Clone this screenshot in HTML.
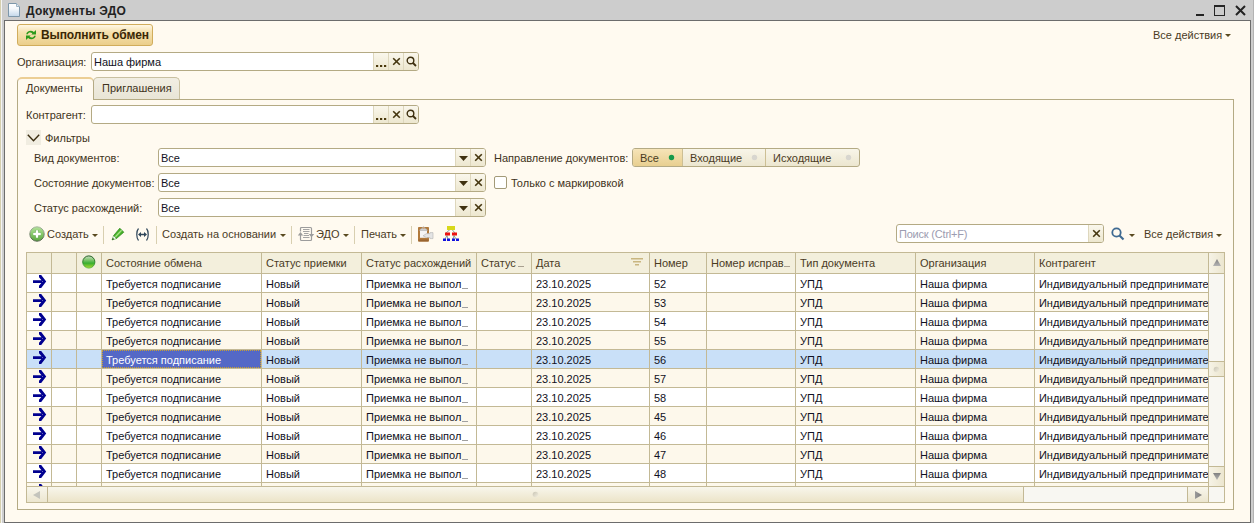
<!DOCTYPE html><html><head><meta charset="utf-8"><style>
*{margin:0;padding:0;box-sizing:border-box}
html,body{width:1254px;height:523px;overflow:hidden;background:#cdcdcd;font-family:"Liberation Sans", sans-serif;font-size:11px}
.a{position:absolute}
.t{position:absolute;white-space:nowrap;line-height:13px}
</style></head><body>
<div class="a" style="left:0px;top:0px;width:1px;height:523px;background:#d6cfae"></div>
<div class="a" style="left:1px;top:0px;width:1px;height:523px;background:#f4f4f4"></div>
<div class="a" style="left:1253px;top:0px;width:1px;height:523px;background:#b3b3b3"></div>
<div class="a" style="left:4px;top:20px;width:1247px;height:503px;border:1px solid #6c6c6c;background:#fffaf0"></div>
<svg class="a" style="left:8px;top:3px" width="12" height="14" viewBox="0 0 12 14">
<defs><linearGradient id="dg" x1="0" y1="0" x2="0" y2="1"><stop offset="0" stop-color="#ffffff"/><stop offset="0.4" stop-color="#f6f9fc"/><stop offset="1" stop-color="#c2d7ea"/></linearGradient></defs>
<path d="M0.5 0.5 H8.5 L11.5 3.5 V13.5 H0.5 Z" fill="url(#dg)" stroke="#7d97aa" stroke-width="1"/>
<path d="M8.5 0.5 V3.5 H11.5" fill="#dde8f0" stroke="#9fb4c4" stroke-width="1"/>
</svg>
<div class="t" style="left:26px;top:5px;color:#222;font-size:12px;font-weight:bold;letter-spacing:0.25px">Документы ЭДО</div>
<div class="a" style="left:1196px;top:14px;width:8px;height:2px;background:#222"></div>
<div class="a" style="left:1214px;top:5px;width:11px;height:11px;border:1px solid #262626;border-top-width:2px"></div>
<svg class="a" style="left:1235px;top:5px" width="11" height="11" viewBox="0 0 11 11"><path d="M1 1 L10 10 M10 1 L1 10" stroke="#222" stroke-width="2"/></svg>
<div class="a" style="left:17px;top:24px;width:136px;height:22px;border:1px solid #d1ad5c;border-radius:3px;background:linear-gradient(#fff8e6 0%,#f6e2b0 35%,#ebcf8c 100%)"></div>
<svg class="a" style="left:26px;top:30px" width="10" height="10" viewBox="0 0 10 10">
<path d="M0.2 4.3 C0.8 1.0 5.0 -0.6 7.9 2.0 L6.5 3.5 C4.6 1.8 2.2 2.3 1.9 4.3 Z M10 0 V4.6 H5.3 Z" fill="#2c9a1c"/>
<path d="M9.8 5.7 C9.2 9.0 5.0 10.6 2.1 8.0 L3.5 6.5 C5.4 8.2 7.8 7.7 8.1 5.7 Z M0 10 V5.4 H4.7 Z" fill="#2c9a1c"/>
</svg>
<div class="t" style="left:41px;top:29px;color:#3a2705;font-size:12px;font-weight:bold;letter-spacing:-0.1px">Выполнить обмен</div>
<div class="t" style="left:1153px;top:29px;color:#4a3b1f;font-size:11px;font-weight:normal;">Все действия</div>
<svg class="a" style="left:1225px;top:34px" width="6" height="4"><path d="M0 0H6L3 3Z" fill="#5a4a20"/></svg>
<div class="t" style="left:17px;top:56px;color:#3e3320;font-size:11px;font-weight:normal;">Организация:</div>
<div class="a" style="left:91px;top:52px;width:328px;height:19px;border:1px solid #b4aa84;border-radius:3px;background:#fff;overflow:hidden">
<div class="a" style="left:281px;top:0;width:15px;height:17px;border-left:1px solid #ded7bd;background:linear-gradient(#faf7ec,#ede7cf)">
<svg class="a" style="left:2px;top:12px" width="11" height="3"><rect x="0" y="0" width="2.2" height="2" fill="#4a380c"/><rect x="4" y="0" width="2.2" height="2" fill="#4a380c"/><rect x="8" y="0" width="2.2" height="2" fill="#4a380c"/></svg>
</div>
<div class="a" style="left:296px;top:0;width:15px;height:17px;border-left:1px solid #ded7bd;background:linear-gradient(#faf7ec,#ede7cf)">
<svg class="a" style="left:3px;top:4px" width="9" height="9"><path d="M1.2 1.2L7.8 7.8M7.8 1.2L1.2 7.8" stroke="#45360f" stroke-width="1.6"/></svg>
</div>
<div class="a" style="left:311px;top:0;width:15px;height:17px;border-left:1px solid #ded7bd;background:linear-gradient(#faf7ec,#ede7cf)">
<svg class="a" style="left:2px;top:3px" width="11" height="11"><circle cx="4.5" cy="4.5" r="3.3" fill="none" stroke="#3e3010" stroke-width="1.4"/><path d="M7 7L10 10" stroke="#3e3010" stroke-width="1.8"/></svg>
</div>
</div>
<div class="t" style="left:94px;top:56px;color:#111122;font-size:11px;font-weight:normal;">Наша фирма</div>
<div class="a" style="left:17px;top:99px;width:1217px;height:411px;border:1px solid #b4aa84;border-top:1px solid #b4aa84"></div>
<div class="a" style="left:93px;top:77px;width:87px;height:22px;border:1px solid #c9c0a0;border-bottom:none;border-radius:5px 5px 0 0;background:linear-gradient(#f1eee3,#e9e5d6)"></div>
<div class="a" style="left:17px;top:77px;width:77px;height:23px;border:1px solid #b4aa84;border-top:2px solid #ecce94;border-bottom:none;border-radius:5px 5px 0 0;background:#fffaf0"></div>
<div class="t" style="left:26px;top:82px;color:#3e3320;font-size:11px;font-weight:normal;">Документы</div>
<div class="t" style="left:102px;top:82px;color:#3e3320;font-size:11px;font-weight:normal;">Приглашения</div>
<div class="t" style="left:26px;top:109px;color:#3e3320;font-size:11px;font-weight:normal;">Контрагент:</div>
<div class="a" style="left:91px;top:105px;width:328px;height:19px;border:1px solid #b4aa84;border-radius:3px;background:#fff;overflow:hidden">
<div class="a" style="left:281px;top:0;width:15px;height:17px;border-left:1px solid #ded7bd;background:linear-gradient(#faf7ec,#ede7cf)">
<svg class="a" style="left:2px;top:12px" width="11" height="3"><rect x="0" y="0" width="2.2" height="2" fill="#4a380c"/><rect x="4" y="0" width="2.2" height="2" fill="#4a380c"/><rect x="8" y="0" width="2.2" height="2" fill="#4a380c"/></svg>
</div>
<div class="a" style="left:296px;top:0;width:15px;height:17px;border-left:1px solid #ded7bd;background:linear-gradient(#faf7ec,#ede7cf)">
<svg class="a" style="left:3px;top:4px" width="9" height="9"><path d="M1.2 1.2L7.8 7.8M7.8 1.2L1.2 7.8" stroke="#45360f" stroke-width="1.6"/></svg>
</div>
<div class="a" style="left:311px;top:0;width:15px;height:17px;border-left:1px solid #ded7bd;background:linear-gradient(#faf7ec,#ede7cf)">
<svg class="a" style="left:2px;top:3px" width="11" height="11"><circle cx="4.5" cy="4.5" r="3.3" fill="none" stroke="#3e3010" stroke-width="1.4"/><path d="M7 7L10 10" stroke="#3e3010" stroke-width="1.8"/></svg>
</div>
</div>
<div class="a" style="left:26px;top:130px;width:15px;height:15px;background:#f1ede1"></div>
<svg class="a" style="left:27px;top:134px" width="13" height="8"><path d="M0.8 0.8L6.5 6.8L12.2 0.8" fill="none" stroke="#3a2c10" stroke-width="1.4"/></svg>
<div class="t" style="left:45px;top:132px;color:#3e3320;font-size:11px;font-weight:normal;">Фильтры</div>
<div class="t" style="left:34px;top:152px;color:#3e3320;font-size:11px;font-weight:normal;">Вид документов:</div>
<div class="a" style="left:158px;top:148px;width:328px;height:19px;border:1px solid #b4aa84;border-radius:3px;background:#fff;overflow:hidden">
<div class="a" style="left:296px;top:0;width:15px;height:17px;border-left:1px solid #ded7bd;background:linear-gradient(#faf7ec,#ede7cf)">
<svg class="a" style="left:3px;top:7px" width="9" height="5"><path d="M0 0H9L4.5 5Z" fill="#3e3010"/></svg>
</div>
<div class="a" style="left:311px;top:0;width:15px;height:17px;border-left:1px solid #ded7bd;background:linear-gradient(#faf7ec,#ede7cf)">
<svg class="a" style="left:3px;top:4px" width="9" height="9"><path d="M1.2 1.2L7.8 7.8M7.8 1.2L1.2 7.8" stroke="#45360f" stroke-width="1.6"/></svg>
</div>
</div>
<div class="t" style="left:161px;top:152px;color:#111122;font-size:11px;font-weight:normal;">Все</div>
<div class="t" style="left:34px;top:177px;color:#3e3320;font-size:11px;font-weight:normal;">Состояние документов:</div>
<div class="a" style="left:158px;top:173px;width:328px;height:19px;border:1px solid #b4aa84;border-radius:3px;background:#fff;overflow:hidden">
<div class="a" style="left:296px;top:0;width:15px;height:17px;border-left:1px solid #ded7bd;background:linear-gradient(#faf7ec,#ede7cf)">
<svg class="a" style="left:3px;top:7px" width="9" height="5"><path d="M0 0H9L4.5 5Z" fill="#3e3010"/></svg>
</div>
<div class="a" style="left:311px;top:0;width:15px;height:17px;border-left:1px solid #ded7bd;background:linear-gradient(#faf7ec,#ede7cf)">
<svg class="a" style="left:3px;top:4px" width="9" height="9"><path d="M1.2 1.2L7.8 7.8M7.8 1.2L1.2 7.8" stroke="#45360f" stroke-width="1.6"/></svg>
</div>
</div>
<div class="t" style="left:161px;top:177px;color:#111122;font-size:11px;font-weight:normal;">Все</div>
<div class="t" style="left:34px;top:202px;color:#3e3320;font-size:11px;font-weight:normal;">Статус расхождений:</div>
<div class="a" style="left:158px;top:198px;width:328px;height:19px;border:1px solid #b4aa84;border-radius:3px;background:#fff;overflow:hidden">
<div class="a" style="left:296px;top:0;width:15px;height:17px;border-left:1px solid #ded7bd;background:linear-gradient(#faf7ec,#ede7cf)">
<svg class="a" style="left:3px;top:7px" width="9" height="5"><path d="M0 0H9L4.5 5Z" fill="#3e3010"/></svg>
</div>
<div class="a" style="left:311px;top:0;width:15px;height:17px;border-left:1px solid #ded7bd;background:linear-gradient(#faf7ec,#ede7cf)">
<svg class="a" style="left:3px;top:4px" width="9" height="9"><path d="M1.2 1.2L7.8 7.8M7.8 1.2L1.2 7.8" stroke="#45360f" stroke-width="1.6"/></svg>
</div>
</div>
<div class="t" style="left:161px;top:202px;color:#111122;font-size:11px;font-weight:normal;">Все</div>
<div class="t" style="left:494px;top:152px;color:#3e3320;font-size:11px;font-weight:normal;">Направление документов:</div>
<div class="a" style="left:632px;top:148px;width:228px;height:19px;border:1px solid #b4aa84;border-radius:3px;overflow:hidden;background:linear-gradient(#f8f5e9,#ece6cf)">
<div class="a" style="left:0;top:0;width:50px;height:17px;background:linear-gradient(#f6e4b8,#e8cf90);border-right:1px solid #cdbf94"></div>
<div class="a" style="left:132px;top:0;width:1px;height:17px;background:#cdbf94"></div>
</div>
<div class="t" style="left:640px;top:152px;color:#4a3b1f;font-size:11px;font-weight:normal;">Все</div>
<svg class="a" style="left:668px;top:154px" width="7" height="7"><circle cx="3.5" cy="3.5" r="2.7" fill="#17994a"/></svg>
<div class="t" style="left:690px;top:152px;color:#4a3b1f;font-size:11px;font-weight:normal;">Входящие</div>
<svg class="a" style="left:751px;top:154px" width="7" height="7"><circle cx="3.5" cy="3.5" r="2.7" fill="#d8d6cf"/></svg>
<div class="t" style="left:773px;top:152px;color:#4a3b1f;font-size:11px;font-weight:normal;">Исходящие</div>
<svg class="a" style="left:845px;top:154px" width="7" height="7"><circle cx="3.5" cy="3.5" r="2.7" fill="#d8d6cf"/></svg>
<div class="a" style="left:494px;top:176px;width:13px;height:13px;border:1px solid #a39a78;border-radius:2px;background:#fff"></div>
<div class="t" style="left:511px;top:177px;color:#3e3320;font-size:11px;font-weight:normal;">Только с маркировкой</div>
<svg class="a" style="left:29px;top:226px" width="16" height="16" viewBox="0 0 16 16">
<defs><linearGradient id="cg" x1="0" y1="0" x2="0" y2="1"><stop offset="0" stop-color="#b4e29c"/><stop offset="0.5" stop-color="#86c86a"/><stop offset="1" stop-color="#5aa63e"/></linearGradient>
<linearGradient id="cgs" x1="0" y1="0" x2="0" y2="1"><stop offset="0" stop-color="#a8b8a0"/><stop offset="1" stop-color="#50604a"/></linearGradient></defs>
<circle cx="8" cy="8" r="7.2" fill="url(#cg)" stroke="url(#cgs)" stroke-width="1"/>
<path d="M8 4V12M4 8H12" stroke="#3f8a2a" stroke-width="3.6" opacity="0.5"/>
<path d="M8 4.2V11.8M4.2 8H11.8" stroke="#fff" stroke-width="2.4"/>
</svg>
<div class="t" style="left:47px;top:228px;color:#4a3b1f;font-size:11px;font-weight:normal;">Создать</div>
<svg class="a" style="left:92px;top:234px" width="6" height="4"><path d="M0 0H6L3 3Z" fill="#5a4a20"/></svg>
<div class="a" style="left:103px;top:226px;width:1px;height:18px;background:#d8cfb0"></div>
<svg class="a" style="left:111px;top:227px" width="14" height="14" viewBox="0 0 14 14">
<path d="M2.6 8.6 L8.8 1.2 L12.8 5.2 L5.4 11.6 Z" fill="#46b02a" stroke="#2a8418" stroke-width="0.7"/>
<path d="M4.4 9.8 L10.6 3.2" stroke="#a6e486" stroke-width="1.3"/>
<path d="M1 13 L2.6 8.6 L5.4 11.6 Z" fill="#ffffff" stroke="#2a8418" stroke-width="0.5"/>
<path d="M1 13 L1.8 10.7 L3.3 12.2 Z" fill="#1a5a0c"/>
</svg>
<svg class="a" style="left:135px;top:228px" width="15" height="13" viewBox="0 0 15 13">
<path d="M3.5 0.5 C1.2 3 1.2 10 3.5 12.5" fill="none" stroke="#2f465a" stroke-width="1.2"/>
<path d="M11.5 0.5 C13.8 3 13.8 10 11.5 12.5" fill="none" stroke="#2f465a" stroke-width="1.2"/>
<path d="M5 6.5H10" stroke="#2f465a" stroke-width="1.5"/>
<path d="M3 6.5L6 4V9Z M12 6.5L9 4V9Z" fill="#2f465a"/>
</svg>
<div class="a" style="left:156px;top:226px;width:1px;height:18px;background:#d8cfb0"></div>
<div class="t" style="left:162px;top:228px;color:#4a3b1f;font-size:11px;font-weight:normal;">Создать на основании</div>
<svg class="a" style="left:280px;top:234px" width="6" height="4"><path d="M0 0H6L3 3Z" fill="#5a4a20"/></svg>
<div class="a" style="left:291px;top:226px;width:1px;height:18px;background:#d8cfb0"></div>
<svg class="a" style="left:297px;top:226px" width="18" height="16" viewBox="0 0 18 16">
<path d="M3.5 5.5 V2.5 Q3.5 1.5 4.5 1.5 H13.5 Q14.5 1.5 14.5 2.5 V8.5" fill="none" stroke="#9c9c9c" stroke-width="1.2"/>
<path d="M3.5 9 V13.5 Q3.5 14.5 4.5 14.5 H13.5 Q14.5 14.5 14.5 13.5 V11" fill="none" stroke="#9c9c9c" stroke-width="1.2"/>
<path d="M0.8 9.6 H6.2 L3.5 6 Z M11.8 8 H17.2 L14.5 11.6 Z" fill="#9c9c9c"/>
<path d="M6 3.5H12.5M6 5.5H12.5M7 7.5H11.5M6.5 9.5H12M6 11.5H12.5" stroke="#a4a4a4" stroke-width="1"/>
</svg>
<div class="t" style="left:316px;top:228px;color:#4a3b1f;font-size:11px;font-weight:normal;">ЭДО</div>
<svg class="a" style="left:343px;top:234px" width="6" height="4"><path d="M0 0H6L3 3Z" fill="#5a4a20"/></svg>
<div class="a" style="left:354px;top:226px;width:1px;height:18px;background:#d8cfb0"></div>
<div class="t" style="left:361px;top:228px;color:#4a3b1f;font-size:11px;font-weight:normal;">Печать</div>
<svg class="a" style="left:400px;top:234px" width="6" height="4"><path d="M0 0H6L3 3Z" fill="#5a4a20"/></svg>
<div class="a" style="left:411px;top:226px;width:1px;height:18px;background:#d8cfb0"></div>
<svg class="a" style="left:417px;top:226px" width="17" height="16" viewBox="0 0 17 16">
<rect x="1" y="1" width="11" height="14.5" rx="0.8" fill="#b27a3c"/>
<rect x="1.5" y="13.5" width="10" height="2" fill="#9a6530"/>
<rect x="3" y="3.6" width="7" height="8.2" fill="#f5f5f5"/>
<path d="M2.4 4.4 L4.2 2.4 H5.4 V1.4 Q6.5 0 7.6 1.4 V2.4 H8.8 L10.6 4.4 Z" fill="#d0d0d0" stroke="#a0a0a0" stroke-width="0.5"/>
<circle cx="6.5" cy="2" r="0.7" fill="#d9883a"/>
<path d="M6 9.8 L9.5 7.6 H13 V6.6 H16 V12.6 H13 V11.6 H9.5 Z" fill="#e4e4e4" stroke="#b4b4b4" stroke-width="0.6"/>
</svg>
<svg class="a" style="left:442px;top:226px" width="18" height="16" viewBox="0 0 18 16">
<path d="M8 3.5L4 7M10 3.5L13 7M5 9.5L3 13M5 9.5L6 13M12 9.5L11 13M12 9.5L14 13" stroke="#6a8a8a" stroke-width="0.8"/>
<rect x="5" y="0" width="8" height="4" fill="#d8d81a"/>
<rect x="3" y="6.5" width="5" height="3" fill="#ee1111"/>
<rect x="10" y="6.5" width="5" height="3" fill="#ee1111"/>
<rect x="1" y="12.5" width="3" height="2.5" fill="#1111dd"/>
<rect x="5" y="12.5" width="3" height="2.5" fill="#1111dd"/>
<rect x="10" y="12.5" width="3" height="2.5" fill="#1111dd"/>
<rect x="14" y="12.5" width="3" height="2.5" fill="#1111dd"/>
</svg>
<div class="a" style="left:896px;top:224px;width:208px;height:19px;border:1px solid #b4aa84;border-radius:3px;background:#fff;overflow:hidden">
<div class="a" style="left:191px;top:0;width:15px;height:17px;border-left:1px solid #ded7bd;background:linear-gradient(#faf7ec,#ede7cf)"><svg class="a" style="left:3px;top:4px" width="9" height="9"><path d="M1.2 1.2L7.8 7.8M7.8 1.2L1.2 7.8" stroke="#45360f" stroke-width="1.6"/></svg></div>
</div>
<div class="t" style="left:899px;top:228px;color:#9c9cb0;font-size:11px;font-weight:normal;letter-spacing:-0.2px">Поиск (Ctrl+F)</div>
<svg class="a" style="left:1111px;top:227px" width="14" height="14"><circle cx="5.5" cy="5.5" r="4.2" fill="none" stroke="#3f6a92" stroke-width="1.8"/><path d="M8.5 8.5L12.5 12.5" stroke="#3f6a92" stroke-width="2.2"/></svg>
<svg class="a" style="left:1129px;top:234px" width="6" height="4"><path d="M0 0H6L3 3Z" fill="#5a4a20"/></svg>
<div class="t" style="left:1144px;top:228px;color:#4a3b1f;font-size:11px;font-weight:normal;">Все действия</div>
<svg class="a" style="left:1216px;top:234px" width="6" height="4"><path d="M0 0H6L3 3Z" fill="#5a4a20"/></svg>
<div class="a" style="left:26px;top:252px;width:1199px;height:251px;border:1px solid #c3b995;background:#fff;overflow:hidden"></div>
<div class="a" style="left:27px;top:253px;width:1181px;height:20px;background:#f3efdc"></div>
<div class="a" style="left:27px;top:274px;width:1181px;height:18px;background:#ffffff"></div>
<div class="a" style="left:27px;top:292px;width:1181px;height:1px;background:#c3b995"></div>
<div class="a" style="left:27px;top:293px;width:1181px;height:18px;background:#fdf8eb"></div>
<div class="a" style="left:27px;top:311px;width:1181px;height:1px;background:#c3b995"></div>
<div class="a" style="left:27px;top:312px;width:1181px;height:18px;background:#ffffff"></div>
<div class="a" style="left:27px;top:330px;width:1181px;height:1px;background:#c3b995"></div>
<div class="a" style="left:27px;top:331px;width:1181px;height:18px;background:#fdf8eb"></div>
<div class="a" style="left:27px;top:349px;width:1181px;height:1px;background:#c3b995"></div>
<div class="a" style="left:27px;top:350px;width:1181px;height:18px;background:#c9e0f8"></div>
<div class="a" style="left:27px;top:368px;width:1181px;height:1px;background:#c3b995"></div>
<div class="a" style="left:27px;top:369px;width:1181px;height:18px;background:#fdf8eb"></div>
<div class="a" style="left:27px;top:387px;width:1181px;height:1px;background:#c3b995"></div>
<div class="a" style="left:27px;top:388px;width:1181px;height:18px;background:#ffffff"></div>
<div class="a" style="left:27px;top:406px;width:1181px;height:1px;background:#c3b995"></div>
<div class="a" style="left:27px;top:407px;width:1181px;height:18px;background:#fdf8eb"></div>
<div class="a" style="left:27px;top:425px;width:1181px;height:1px;background:#c3b995"></div>
<div class="a" style="left:27px;top:426px;width:1181px;height:18px;background:#ffffff"></div>
<div class="a" style="left:27px;top:444px;width:1181px;height:1px;background:#c3b995"></div>
<div class="a" style="left:27px;top:445px;width:1181px;height:18px;background:#fdf8eb"></div>
<div class="a" style="left:27px;top:463px;width:1181px;height:1px;background:#c3b995"></div>
<div class="a" style="left:27px;top:464px;width:1181px;height:18px;background:#ffffff"></div>
<div class="a" style="left:27px;top:482px;width:1181px;height:1px;background:#c3b995"></div>
<div class="a" style="left:27px;top:483px;width:1181px;height:3px;background:#fdf8eb"></div>
<div class="a" style="left:27px;top:486px;width:1181px;height:1px;background:#c3b995"></div>
<div class="a" style="left:27px;top:273px;width:1181px;height:1px;background:#c3b995"></div>
<div class="a" style="left:51px;top:253px;width:1px;height:233px;background:#c3b995"></div>
<div class="a" style="left:76px;top:253px;width:1px;height:233px;background:#c3b995"></div>
<div class="a" style="left:101px;top:253px;width:1px;height:233px;background:#c3b995"></div>
<div class="a" style="left:261px;top:253px;width:1px;height:233px;background:#c3b995"></div>
<div class="a" style="left:361px;top:253px;width:1px;height:233px;background:#c3b995"></div>
<div class="a" style="left:476px;top:253px;width:1px;height:233px;background:#c3b995"></div>
<div class="a" style="left:531px;top:253px;width:1px;height:233px;background:#c3b995"></div>
<div class="a" style="left:649px;top:253px;width:1px;height:233px;background:#c3b995"></div>
<div class="a" style="left:706px;top:253px;width:1px;height:233px;background:#c3b995"></div>
<div class="a" style="left:795px;top:253px;width:1px;height:233px;background:#c3b995"></div>
<div class="a" style="left:915px;top:253px;width:1px;height:233px;background:#c3b995"></div>
<div class="a" style="left:1034px;top:253px;width:1px;height:233px;background:#c3b995"></div>
<div class="a" style="left:1208px;top:253px;width:1px;height:233px;background:#c3b995"></div>
<div class="a" style="left:102px;top:350px;width:159px;height:18px;background:#5468c6;outline:1px dotted #c9a030;outline-offset:-1px"></div>
<div class="t" style="left:106px;top:257px;color:#4a3b1f;font-size:11px;font-weight:normal;">Состояние обмена</div>
<div class="t" style="left:266px;top:257px;color:#4a3b1f;font-size:11px;font-weight:normal;">Статус приемки</div>
<div class="t" style="left:366px;top:257px;color:#4a3b1f;font-size:11px;font-weight:normal;">Статус расхождений</div>
<div class="t" style="left:481px;top:257px;color:#4a3b1f;font-size:11px;font-weight:normal;">Статус</div>
<div class="t" style="left:536px;top:257px;color:#4a3b1f;font-size:11px;font-weight:normal;">Дата</div>
<div class="t" style="left:654px;top:257px;color:#4a3b1f;font-size:11px;font-weight:normal;">Номер</div>
<div class="t" style="left:711px;top:257px;color:#4a3b1f;font-size:11px;font-weight:normal;">Номер исправ</div>
<div class="t" style="left:800px;top:257px;color:#4a3b1f;font-size:11px;font-weight:normal;">Тип документа</div>
<div class="t" style="left:920px;top:257px;color:#4a3b1f;font-size:11px;font-weight:normal;">Организация</div>
<div class="t" style="left:1039px;top:257px;color:#4a3b1f;font-size:11px;font-weight:normal;">Контрагент</div>
<div class="a" style="left:518px;top:266px;width:6px;height:1px;background:#a8a090"></div>
<div class="a" style="left:784px;top:266px;width:6px;height:1px;background:#a8a090"></div>
<svg class="a" style="left:82px;top:255px" width="14" height="14" viewBox="0 0 14 14">
<defs><linearGradient id="gb" x1="0" y1="0" x2="0" y2="1"><stop offset="0" stop-color="#c8dcc4"/><stop offset="0.35" stop-color="#7cc46a"/><stop offset="0.6" stop-color="#38b030"/><stop offset="1" stop-color="#b0d830"/></linearGradient>
<linearGradient id="gbs" x1="0" y1="0" x2="0" y2="1"><stop offset="0" stop-color="#0c4a0c"/><stop offset="0.6" stop-color="#2a8a2a"/><stop offset="1" stop-color="#5cc040"/></linearGradient></defs>
<circle cx="6.8" cy="7" r="6.1" fill="url(#gb)" stroke="url(#gbs)" stroke-width="0.9"/>
</svg>
<svg class="a" style="left:631px;top:258px" width="12" height="8"><path d="M0 0H12V1.5H0Z M2 3H10V4.5H2Z M4 6H8V7.5H4Z" fill="#c9b680"/></svg>
<svg class="a" style="left:33px;top:275px" width="14" height="14" viewBox="0 0 14 14"><path d="M0 5.2H9V7.9H0Z M6 0H8.2L13.2 6.5L8.2 13H6V10.8L9.6 6.5L6 2.2Z" fill="#000090"/></svg>
<div class="t" style="left:106px;top:278px;color:#111122;font-size:11px;font-weight:normal;">Требуется подписание</div>
<div class="t" style="left:266px;top:278px;color:#111122;font-size:11px;font-weight:normal;">Новый</div>
<div class="t" style="left:366px;top:278px;color:#111122;font-size:11px;font-weight:normal;">Приемка не выпол</div>
<div class="a" style="left:462px;top:288px;width:6px;height:1px;background:#a0a0a0"></div>
<div class="t" style="left:536px;top:278px;color:#111122;font-size:11px;font-weight:normal;">23.10.2025</div>
<div class="t" style="left:654px;top:278px;color:#111122;font-size:11px;font-weight:normal;">52</div>
<div class="t" style="left:800px;top:278px;color:#111122;font-size:11px;font-weight:normal;">УПД</div>
<div class="t" style="left:920px;top:278px;color:#111122;font-size:11px;font-weight:normal;">Наша фирма</div>
<div class="t" style="left:1039px;top:278px;width:169px;overflow:hidden;letter-spacing:-0.05px;color:#111122">Индивидуальный предприниматель</div>
<svg class="a" style="left:33px;top:294px" width="14" height="14" viewBox="0 0 14 14"><path d="M0 5.2H9V7.9H0Z M6 0H8.2L13.2 6.5L8.2 13H6V10.8L9.6 6.5L6 2.2Z" fill="#000090"/></svg>
<div class="t" style="left:106px;top:297px;color:#111122;font-size:11px;font-weight:normal;">Требуется подписание</div>
<div class="t" style="left:266px;top:297px;color:#111122;font-size:11px;font-weight:normal;">Новый</div>
<div class="t" style="left:366px;top:297px;color:#111122;font-size:11px;font-weight:normal;">Приемка не выпол</div>
<div class="a" style="left:462px;top:307px;width:6px;height:1px;background:#a0a0a0"></div>
<div class="t" style="left:536px;top:297px;color:#111122;font-size:11px;font-weight:normal;">23.10.2025</div>
<div class="t" style="left:654px;top:297px;color:#111122;font-size:11px;font-weight:normal;">53</div>
<div class="t" style="left:800px;top:297px;color:#111122;font-size:11px;font-weight:normal;">УПД</div>
<div class="t" style="left:920px;top:297px;color:#111122;font-size:11px;font-weight:normal;">Наша фирма</div>
<div class="t" style="left:1039px;top:297px;width:169px;overflow:hidden;letter-spacing:-0.05px;color:#111122">Индивидуальный предприниматель</div>
<svg class="a" style="left:33px;top:313px" width="14" height="14" viewBox="0 0 14 14"><path d="M0 5.2H9V7.9H0Z M6 0H8.2L13.2 6.5L8.2 13H6V10.8L9.6 6.5L6 2.2Z" fill="#000090"/></svg>
<div class="t" style="left:106px;top:316px;color:#111122;font-size:11px;font-weight:normal;">Требуется подписание</div>
<div class="t" style="left:266px;top:316px;color:#111122;font-size:11px;font-weight:normal;">Новый</div>
<div class="t" style="left:366px;top:316px;color:#111122;font-size:11px;font-weight:normal;">Приемка не выпол</div>
<div class="a" style="left:462px;top:326px;width:6px;height:1px;background:#a0a0a0"></div>
<div class="t" style="left:536px;top:316px;color:#111122;font-size:11px;font-weight:normal;">23.10.2025</div>
<div class="t" style="left:654px;top:316px;color:#111122;font-size:11px;font-weight:normal;">54</div>
<div class="t" style="left:800px;top:316px;color:#111122;font-size:11px;font-weight:normal;">УПД</div>
<div class="t" style="left:920px;top:316px;color:#111122;font-size:11px;font-weight:normal;">Наша фирма</div>
<div class="t" style="left:1039px;top:316px;width:169px;overflow:hidden;letter-spacing:-0.05px;color:#111122">Индивидуальный предприниматель</div>
<svg class="a" style="left:33px;top:332px" width="14" height="14" viewBox="0 0 14 14"><path d="M0 5.2H9V7.9H0Z M6 0H8.2L13.2 6.5L8.2 13H6V10.8L9.6 6.5L6 2.2Z" fill="#000090"/></svg>
<div class="t" style="left:106px;top:335px;color:#111122;font-size:11px;font-weight:normal;">Требуется подписание</div>
<div class="t" style="left:266px;top:335px;color:#111122;font-size:11px;font-weight:normal;">Новый</div>
<div class="t" style="left:366px;top:335px;color:#111122;font-size:11px;font-weight:normal;">Приемка не выпол</div>
<div class="a" style="left:462px;top:345px;width:6px;height:1px;background:#a0a0a0"></div>
<div class="t" style="left:536px;top:335px;color:#111122;font-size:11px;font-weight:normal;">23.10.2025</div>
<div class="t" style="left:654px;top:335px;color:#111122;font-size:11px;font-weight:normal;">55</div>
<div class="t" style="left:800px;top:335px;color:#111122;font-size:11px;font-weight:normal;">УПД</div>
<div class="t" style="left:920px;top:335px;color:#111122;font-size:11px;font-weight:normal;">Наша фирма</div>
<div class="t" style="left:1039px;top:335px;width:169px;overflow:hidden;letter-spacing:-0.05px;color:#111122">Индивидуальный предприниматель</div>
<svg class="a" style="left:33px;top:351px" width="14" height="14" viewBox="0 0 14 14"><path d="M0 5.2H9V7.9H0Z M6 0H8.2L13.2 6.5L8.2 13H6V10.8L9.6 6.5L6 2.2Z" fill="#000090"/></svg>
<div class="t" style="left:106px;top:354px;color:#fff;font-size:11px;font-weight:normal;">Требуется подписание</div>
<div class="t" style="left:266px;top:354px;color:#111122;font-size:11px;font-weight:normal;">Новый</div>
<div class="t" style="left:366px;top:354px;color:#111122;font-size:11px;font-weight:normal;">Приемка не выпол</div>
<div class="a" style="left:462px;top:364px;width:6px;height:1px;background:#a0a0a0"></div>
<div class="t" style="left:536px;top:354px;color:#111122;font-size:11px;font-weight:normal;">23.10.2025</div>
<div class="t" style="left:654px;top:354px;color:#111122;font-size:11px;font-weight:normal;">56</div>
<div class="t" style="left:800px;top:354px;color:#111122;font-size:11px;font-weight:normal;">УПД</div>
<div class="t" style="left:920px;top:354px;color:#111122;font-size:11px;font-weight:normal;">Наша фирма</div>
<div class="t" style="left:1039px;top:354px;width:169px;overflow:hidden;letter-spacing:-0.05px;color:#111122">Индивидуальный предприниматель</div>
<svg class="a" style="left:33px;top:370px" width="14" height="14" viewBox="0 0 14 14"><path d="M0 5.2H9V7.9H0Z M6 0H8.2L13.2 6.5L8.2 13H6V10.8L9.6 6.5L6 2.2Z" fill="#000090"/></svg>
<div class="t" style="left:106px;top:373px;color:#111122;font-size:11px;font-weight:normal;">Требуется подписание</div>
<div class="t" style="left:266px;top:373px;color:#111122;font-size:11px;font-weight:normal;">Новый</div>
<div class="t" style="left:366px;top:373px;color:#111122;font-size:11px;font-weight:normal;">Приемка не выпол</div>
<div class="a" style="left:462px;top:383px;width:6px;height:1px;background:#a0a0a0"></div>
<div class="t" style="left:536px;top:373px;color:#111122;font-size:11px;font-weight:normal;">23.10.2025</div>
<div class="t" style="left:654px;top:373px;color:#111122;font-size:11px;font-weight:normal;">57</div>
<div class="t" style="left:800px;top:373px;color:#111122;font-size:11px;font-weight:normal;">УПД</div>
<div class="t" style="left:920px;top:373px;color:#111122;font-size:11px;font-weight:normal;">Наша фирма</div>
<div class="t" style="left:1039px;top:373px;width:169px;overflow:hidden;letter-spacing:-0.05px;color:#111122">Индивидуальный предприниматель</div>
<svg class="a" style="left:33px;top:389px" width="14" height="14" viewBox="0 0 14 14"><path d="M0 5.2H9V7.9H0Z M6 0H8.2L13.2 6.5L8.2 13H6V10.8L9.6 6.5L6 2.2Z" fill="#000090"/></svg>
<div class="t" style="left:106px;top:392px;color:#111122;font-size:11px;font-weight:normal;">Требуется подписание</div>
<div class="t" style="left:266px;top:392px;color:#111122;font-size:11px;font-weight:normal;">Новый</div>
<div class="t" style="left:366px;top:392px;color:#111122;font-size:11px;font-weight:normal;">Приемка не выпол</div>
<div class="a" style="left:462px;top:402px;width:6px;height:1px;background:#a0a0a0"></div>
<div class="t" style="left:536px;top:392px;color:#111122;font-size:11px;font-weight:normal;">23.10.2025</div>
<div class="t" style="left:654px;top:392px;color:#111122;font-size:11px;font-weight:normal;">58</div>
<div class="t" style="left:800px;top:392px;color:#111122;font-size:11px;font-weight:normal;">УПД</div>
<div class="t" style="left:920px;top:392px;color:#111122;font-size:11px;font-weight:normal;">Наша фирма</div>
<div class="t" style="left:1039px;top:392px;width:169px;overflow:hidden;letter-spacing:-0.05px;color:#111122">Индивидуальный предприниматель</div>
<svg class="a" style="left:33px;top:408px" width="14" height="14" viewBox="0 0 14 14"><path d="M0 5.2H9V7.9H0Z M6 0H8.2L13.2 6.5L8.2 13H6V10.8L9.6 6.5L6 2.2Z" fill="#000090"/></svg>
<div class="t" style="left:106px;top:411px;color:#111122;font-size:11px;font-weight:normal;">Требуется подписание</div>
<div class="t" style="left:266px;top:411px;color:#111122;font-size:11px;font-weight:normal;">Новый</div>
<div class="t" style="left:366px;top:411px;color:#111122;font-size:11px;font-weight:normal;">Приемка не выпол</div>
<div class="a" style="left:462px;top:421px;width:6px;height:1px;background:#a0a0a0"></div>
<div class="t" style="left:536px;top:411px;color:#111122;font-size:11px;font-weight:normal;">23.10.2025</div>
<div class="t" style="left:654px;top:411px;color:#111122;font-size:11px;font-weight:normal;">45</div>
<div class="t" style="left:800px;top:411px;color:#111122;font-size:11px;font-weight:normal;">УПД</div>
<div class="t" style="left:920px;top:411px;color:#111122;font-size:11px;font-weight:normal;">Наша фирма</div>
<div class="t" style="left:1039px;top:411px;width:169px;overflow:hidden;letter-spacing:-0.05px;color:#111122">Индивидуальный предприниматель</div>
<svg class="a" style="left:33px;top:427px" width="14" height="14" viewBox="0 0 14 14"><path d="M0 5.2H9V7.9H0Z M6 0H8.2L13.2 6.5L8.2 13H6V10.8L9.6 6.5L6 2.2Z" fill="#000090"/></svg>
<div class="t" style="left:106px;top:430px;color:#111122;font-size:11px;font-weight:normal;">Требуется подписание</div>
<div class="t" style="left:266px;top:430px;color:#111122;font-size:11px;font-weight:normal;">Новый</div>
<div class="t" style="left:366px;top:430px;color:#111122;font-size:11px;font-weight:normal;">Приемка не выпол</div>
<div class="a" style="left:462px;top:440px;width:6px;height:1px;background:#a0a0a0"></div>
<div class="t" style="left:536px;top:430px;color:#111122;font-size:11px;font-weight:normal;">23.10.2025</div>
<div class="t" style="left:654px;top:430px;color:#111122;font-size:11px;font-weight:normal;">46</div>
<div class="t" style="left:800px;top:430px;color:#111122;font-size:11px;font-weight:normal;">УПД</div>
<div class="t" style="left:920px;top:430px;color:#111122;font-size:11px;font-weight:normal;">Наша фирма</div>
<div class="t" style="left:1039px;top:430px;width:169px;overflow:hidden;letter-spacing:-0.05px;color:#111122">Индивидуальный предприниматель</div>
<svg class="a" style="left:33px;top:446px" width="14" height="14" viewBox="0 0 14 14"><path d="M0 5.2H9V7.9H0Z M6 0H8.2L13.2 6.5L8.2 13H6V10.8L9.6 6.5L6 2.2Z" fill="#000090"/></svg>
<div class="t" style="left:106px;top:449px;color:#111122;font-size:11px;font-weight:normal;">Требуется подписание</div>
<div class="t" style="left:266px;top:449px;color:#111122;font-size:11px;font-weight:normal;">Новый</div>
<div class="t" style="left:366px;top:449px;color:#111122;font-size:11px;font-weight:normal;">Приемка не выпол</div>
<div class="a" style="left:462px;top:459px;width:6px;height:1px;background:#a0a0a0"></div>
<div class="t" style="left:536px;top:449px;color:#111122;font-size:11px;font-weight:normal;">23.10.2025</div>
<div class="t" style="left:654px;top:449px;color:#111122;font-size:11px;font-weight:normal;">47</div>
<div class="t" style="left:800px;top:449px;color:#111122;font-size:11px;font-weight:normal;">УПД</div>
<div class="t" style="left:920px;top:449px;color:#111122;font-size:11px;font-weight:normal;">Наша фирма</div>
<div class="t" style="left:1039px;top:449px;width:169px;overflow:hidden;letter-spacing:-0.05px;color:#111122">Индивидуальный предприниматель</div>
<svg class="a" style="left:33px;top:465px" width="14" height="14" viewBox="0 0 14 14"><path d="M0 5.2H9V7.9H0Z M6 0H8.2L13.2 6.5L8.2 13H6V10.8L9.6 6.5L6 2.2Z" fill="#000090"/></svg>
<div class="t" style="left:106px;top:468px;color:#111122;font-size:11px;font-weight:normal;">Требуется подписание</div>
<div class="t" style="left:266px;top:468px;color:#111122;font-size:11px;font-weight:normal;">Новый</div>
<div class="t" style="left:366px;top:468px;color:#111122;font-size:11px;font-weight:normal;">Приемка не выпол</div>
<div class="a" style="left:462px;top:478px;width:6px;height:1px;background:#a0a0a0"></div>
<div class="t" style="left:536px;top:468px;color:#111122;font-size:11px;font-weight:normal;">23.10.2025</div>
<div class="t" style="left:654px;top:468px;color:#111122;font-size:11px;font-weight:normal;">48</div>
<div class="t" style="left:800px;top:468px;color:#111122;font-size:11px;font-weight:normal;">УПД</div>
<div class="t" style="left:920px;top:468px;color:#111122;font-size:11px;font-weight:normal;">Наша фирма</div>
<div class="t" style="left:1039px;top:468px;width:169px;overflow:hidden;letter-spacing:-0.05px;color:#111122">Индивидуальный предприниматель</div>
<div class="a" style="left:27px;top:483px;width:24px;height:3px;overflow:hidden"><svg class="a" style="left:6px;top:1px" width="14" height="14" viewBox="0 0 14 14"><path d="M0 5.2H9V7.9H0Z M6 0H8.2L13.2 6.5L8.2 13H6V10.8L9.6 6.5L6 2.2Z" fill="#000090"/></svg></div>
<div class="a" style="left:1208px;top:253px;width:16px;height:233px;background:#f8f7f2;border-left:1px solid #c3b995"></div>
<div class="a" style="left:1209px;top:253px;width:15px;height:21px;background:linear-gradient(90deg,#f6f3e6,#ece6cf);border-bottom:1px solid #c3b995"></div>
<svg class="a" style="left:1213px;top:259px" width="8" height="7"><defs><linearGradient id="sa" x1="0" y1="0" x2="0" y2="1"><stop offset="0" stop-color="#808080"/><stop offset="1" stop-color="#b4b4b4"/></linearGradient></defs><path d="M4 0L8 7H0Z" fill="url(#sa)"/></svg>
<div class="a" style="left:1209px;top:361px;width:15px;height:16px;background:linear-gradient(90deg,#f6f3e6,#ece6cf);border-top:1px solid #c3b995;border-bottom:1px solid #c3b995"></div>
<div class="a" style="left:1209px;top:466px;width:15px;height:20px;background:linear-gradient(90deg,#f6f3e6,#ece6cf);border-top:1px solid #c3b995"></div>
<svg class="a" style="left:1213px;top:473px" width="8" height="7"><path d="M0 0H8L4 7Z" fill="url(#sa)"/></svg>
<div class="a" style="left:27px;top:486px;width:1197px;height:16px;background:#f8f7f2;border-top:1px solid #c3b995"></div>
<div class="a" style="left:27px;top:487px;width:21px;height:15px;background:linear-gradient(#f8f6ec,#ece6cf);border-right:1px solid #c3b995"></div>
<svg class="a" style="left:33px;top:491px" width="7" height="8"><path d="M0 4L7 0V8Z" fill="#c4c4bc"/></svg>
<div class="a" style="left:48px;top:487px;width:976px;height:15px;background:linear-gradient(#f8f6ec,#ece4c8);border-right:1px solid #c3b995"></div>
<div class="a" style="left:1187px;top:487px;width:21px;height:15px;background:linear-gradient(#f8f6ec,#ece6cf);border-left:1px solid #c3b995"></div>
<svg class="a" style="left:1195px;top:491px" width="7" height="8"><defs><linearGradient id="sb" x1="0" y1="0" x2="1" y2="0"><stop offset="0" stop-color="#9a9a9a"/><stop offset="1" stop-color="#7c7c7c"/></linearGradient></defs><path d="M7 4L0 0V8Z" fill="url(#sb)"/></svg>
<div class="a" style="left:1208px;top:487px;width:16px;height:15px;background:#f8f7f2;border-left:1px solid #c3b995"></div>
<svg class="a" style="left:532px;top:491px" width="7" height="7"><defs><linearGradient id="gr" x1="0" y1="0" x2="1" y2="1"><stop offset="0" stop-color="#c8c4b4"/><stop offset="1" stop-color="#f4f0e0"/></linearGradient></defs><circle cx="3.5" cy="3.5" r="2.8" fill="url(#gr)"/></svg>
<svg class="a" style="left:1213px;top:366px" width="7" height="7"><circle cx="3.5" cy="3.5" r="2.8" fill="url(#gr)"/></svg>
</body></html>
